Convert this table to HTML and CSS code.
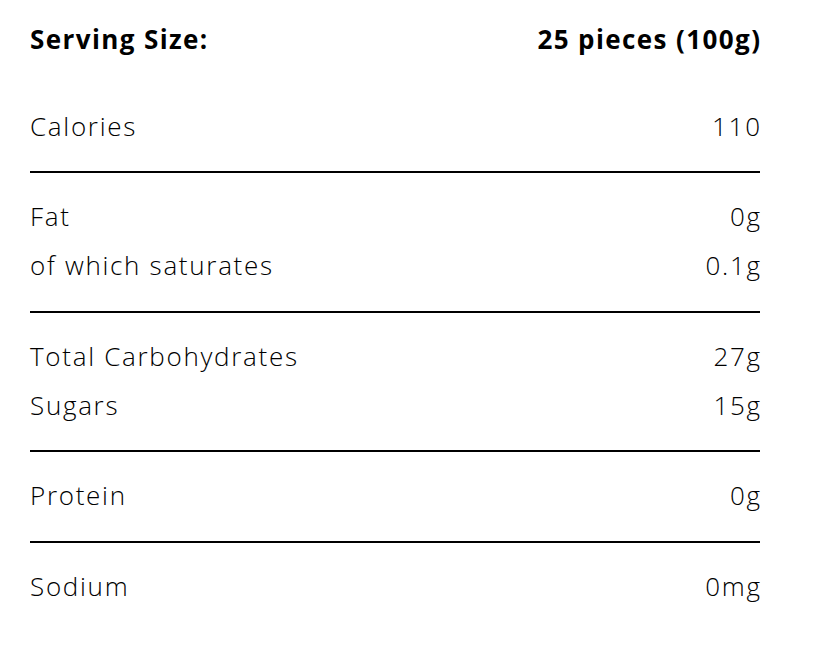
FILE: index.html
```html
<!DOCTYPE html>
<html>
<head>
<meta charset="utf-8">
<link rel="stylesheet" href="styles.css">
</head>
<body>
<div class="panel">
  <div class="serving">
    <span>Serving Size:</span>
    <span class="val">25 pieces (100g)</span>
  </div>
  <div class="section first">
    <div class="row"><span>Calories</span><span class="val">110</span></div>
  </div>
  <div class="section">
    <div class="row"><span>Fat</span><span class="val">0g</span></div>
    <div class="row"><span>of which saturates</span><span class="val">0.1g</span></div>
  </div>
  <div class="section">
    <div class="row"><span>Total Carbohydrates</span><span class="val">27g</span></div>
    <div class="row"><span>Sugars</span><span class="val">15g</span></div>
  </div>
  <div class="section">
    <div class="row"><span>Protein</span><span class="val">0g</span></div>
  </div>
  <div class="section">
    <div class="row"><span>Sodium</span><span class="val">0mg</span></div>
  </div>
</div>
</body>
</html>
```

FILE: styles.css
```css
html, body {
  margin: 0;
  padding: 0;
  background: #fff;
}
.panel {
  width: 730px;
  margin-left: 30px;
  padding-top: 15px;
  font-family: "Open Sans", sans-serif;
  font-size: 26px;
  font-weight: 350;
  letter-spacing: 1.7px;
  color: #000;
}
.serving {
  display: flex;
  justify-content: space-between;
  font-weight: 700;
  letter-spacing: 1.4px;
  line-height: 49px;
  height: 49px;
  margin-bottom: 38px;
}
.serving .val {
  margin-right: -1.4px;
}
.row {
  display: flex;
  justify-content: space-between;
  line-height: 49px;
  height: 49px;
}
.row .val {
  margin-right: -1.7px;
}
.section {
  padding: 19px 0 20.5px;
  border-top: 2px solid #000;
}
.section.first {
  border-top: none;
  padding-top: 0;
  padding-bottom: 20px;
}
```
